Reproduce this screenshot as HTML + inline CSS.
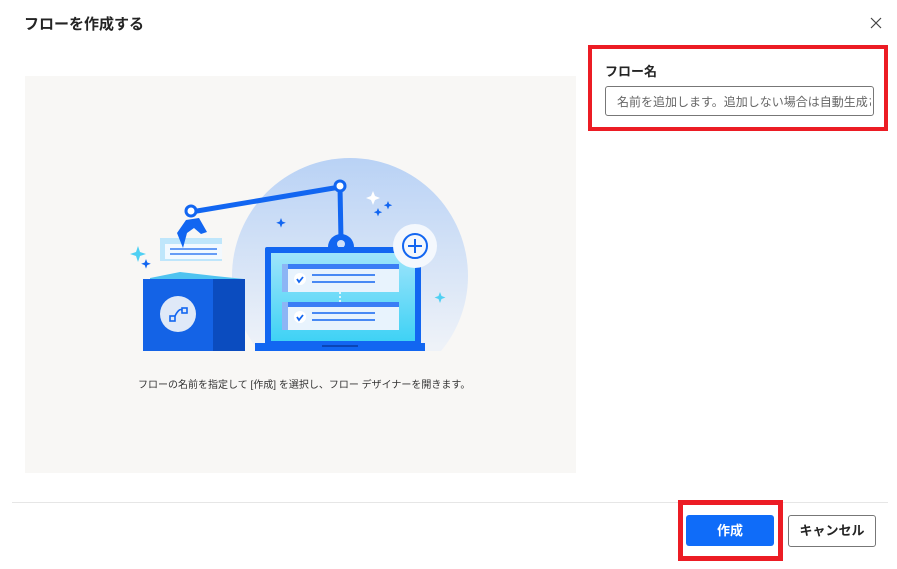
<!DOCTYPE html>
<html><head><meta charset="utf-8"><style>
html,body{margin:0;padding:0;width:897px;height:569px;background:#fff;overflow:hidden;position:relative;font-family:"Liberation Sans","Noto Sans CJK JP",sans-serif;color:#242424}
.abs{position:absolute}
</style></head><body>
<div class="abs" style="left:24px;top:13px;font-size:15px;font-weight:600;">フローを作成する</div>
<svg class="abs" style="left:869px;top:16px" width="14" height="14" viewBox="0 0 14 14"><path d="M2 2L12 12M12 2L2 12" stroke="#444" stroke-width="1.2"/></svg>

<div class="abs" style="left:25px;top:76px;width:551px;height:397px;background:#f8f7f5"></div>

<svg class="abs" style="left:0;top:0" width="897" height="569" viewBox="0 0 897 569">
<defs>
<linearGradient id="g1" x1="0" y1="0" x2="0" y2="1"><stop offset="0" stop-color="#b9d2f5"/><stop offset="0.8" stop-color="#eef2f8"/></linearGradient>
<linearGradient id="g2" x1="0" y1="0" x2="0" y2="1"><stop offset="0" stop-color="#9ee4fb"/><stop offset="1" stop-color="#3fd2f5"/></linearGradient>
</defs>
<circle cx="350" cy="276" r="118" fill="url(#g1)"/>
<rect x="120" y="351" width="360" height="50" fill="#f8f7f5"/>
<path d="M191 212 L340 187 L341 240" stroke="#1266f1" stroke-width="5" fill="none"/>
<circle cx="191" cy="211" r="5" fill="#fff" stroke="#1266f1" stroke-width="3"/>
<circle cx="340" cy="186" r="5" fill="#fff" stroke="#1266f1" stroke-width="3"/>
<path d="M328 247 a13 13 0 0 1 26 0 z" fill="#1266f1"/><circle cx="341" cy="244" r="4" fill="#cfe0fa"/>
<rect x="265" y="247" width="156" height="100" rx="2" fill="#1266f1"/>
<rect x="271" y="253" width="144" height="88" fill="url(#g2)"/>
<rect x="255" y="343" width="170" height="8" fill="#1266f1"/>
<rect x="322" y="345" width="36" height="2" fill="#0b45b5"/>
<rect x="282" y="264" width="117" height="28" fill="#e8f3fd"/><rect x="282" y="264" width="117" height="5" fill="#3a7df5"/><rect x="282" y="264" width="6" height="28" fill="#8cb5f5"/>
<circle cx="300" cy="279" r="6" fill="#fff"/><path d="M297 279l2 3 4-5" stroke="#1266f1" stroke-width="1.8" fill="none"/>
<path d="M312 275h63M312 282h63" stroke="#1266f1" stroke-width="1.6"/>
<rect x="282" y="302" width="117" height="28" fill="#e8f3fd"/><rect x="282" y="302" width="117" height="5" fill="#3a7df5"/><rect x="282" y="302" width="6" height="28" fill="#8cb5f5"/>
<circle cx="300" cy="317" r="6" fill="#fff"/><path d="M297 317l2 3 4-5" stroke="#1266f1" stroke-width="1.8" fill="none"/>
<path d="M312 313h63M312 320h63" stroke="#1266f1" stroke-width="1.6"/>
<path d="M340 292v10" stroke="#fff" stroke-width="1.5" stroke-dasharray="2 2"/>
<circle cx="415" cy="246" r="22" fill="#f4f8fd"/>
<circle cx="415" cy="246" r="12" fill="none" stroke="#1266f1" stroke-width="2"/>
<path d="M415 239v14M408 246h14" stroke="#1266f1" stroke-width="2"/>
<path d="M150 278 L180 272 L215 276 L244 279 L244 283 L150 283z" fill="#4fc3f0"/>
<rect x="143" y="279" width="102" height="72" fill="#1463e6"/>
<rect x="213" y="279" width="32" height="72" fill="#0b4cbf"/>
<circle cx="178" cy="314" r="18" fill="#dfe9f8"/>
<rect x="170" y="316" width="5" height="5" fill="none" stroke="#1266f1" stroke-width="1.6"/>
<rect x="182" y="308" width="5" height="5" fill="none" stroke="#1266f1" stroke-width="1.6"/>
<path d="M175 316 q4 -8 7 -6" stroke="#1266f1" stroke-width="1.6" fill="none"/>
<rect x="160" y="238" width="62" height="23" fill="#bfe6fb"/>
<rect x="165" y="244" width="57" height="15" fill="#f2f9ff"/>
<path d="M170 249h47M170 254h47" stroke="#1266f1" stroke-width="1.3"/>
<path d="M186 220 L177 233 L183 248 L187 233 L194 228 L201 234 L207 232 L199 218z" fill="#1266f1"/>
<g fill="#4fd0f3"><path d="M138 246l2 6 6 2-6 2-2 6-2-6-6-2 6-2z"/><path d="M440 292l1.5 4 4 1.5-4 1.5-1.5 4-1.5-4-4-1.5 4-1.5z"/></g>
<g fill="#1266f1"><path d="M146 259l1.3 3.5 3.5 1.3-3.5 1.3-1.3 3.5-1.3-3.5-3.5-1.3 3.5-1.3z"/><path d="M281 218l1.3 3.5 3.5 1.3-3.5 1.3-1.3 3.5-1.3-3.5-3.5-1.3 3.5-1.3z"/><path d="M388 201l1.2 3 3 1.2-3 1.2-1.2 3-1.2-3-3-1.2 3-1.2z"/><path d="M378 208l1.2 3 3 1.2-3 1.2-1.2 3-1.2-3-3-1.2 3-1.2z"/></g>
<path d="M373 191l2 5 5 2-5 2-2 5-2-5-5-2 5-2z" fill="#fff"/>
</svg>

<div class="abs" style="left:138px;top:376px;font-size:10px;color:#333;white-space:nowrap">フローの名前を指定して [作成] を選択し、フロー デザイナーを開きます。</div>

<div class="abs" style="left:588px;top:45px;width:292px;height:78px;border:4px solid #ec1c24"></div>
<div class="abs" style="left:605px;top:61px;font-size:13px;font-weight:600">フロー名</div>
<div class="abs" style="left:605px;top:86px;width:269px;height:30px;border:1px solid #777;border-radius:3px;box-sizing:border-box;"></div>
<div class="abs" style="left:617px;top:93px;width:254px;overflow:hidden;white-space:nowrap;font-size:12px;color:#666">名前を追加します。追加しない場合は自動生成されます</div>

<div class="abs" style="left:12px;top:502px;width:876px;height:1px;background:#e6e6e6"></div>
<div class="abs" style="left:678px;top:500px;width:95px;height:51px;border:5px solid #ec1c24"></div>
<div class="abs" style="left:686px;top:515px;width:88px;height:31px;background:#0f6cf9;border-radius:3px;color:#fff;font-size:13px;font-weight:600;text-align:center;line-height:31px">作成</div>
<div class="abs" style="left:788px;top:515px;width:88px;height:32px;border:1px solid #777;border-radius:3px;box-sizing:border-box;font-size:13px;font-weight:600;text-align:center;line-height:30px">キャンセル</div>
</body></html>
